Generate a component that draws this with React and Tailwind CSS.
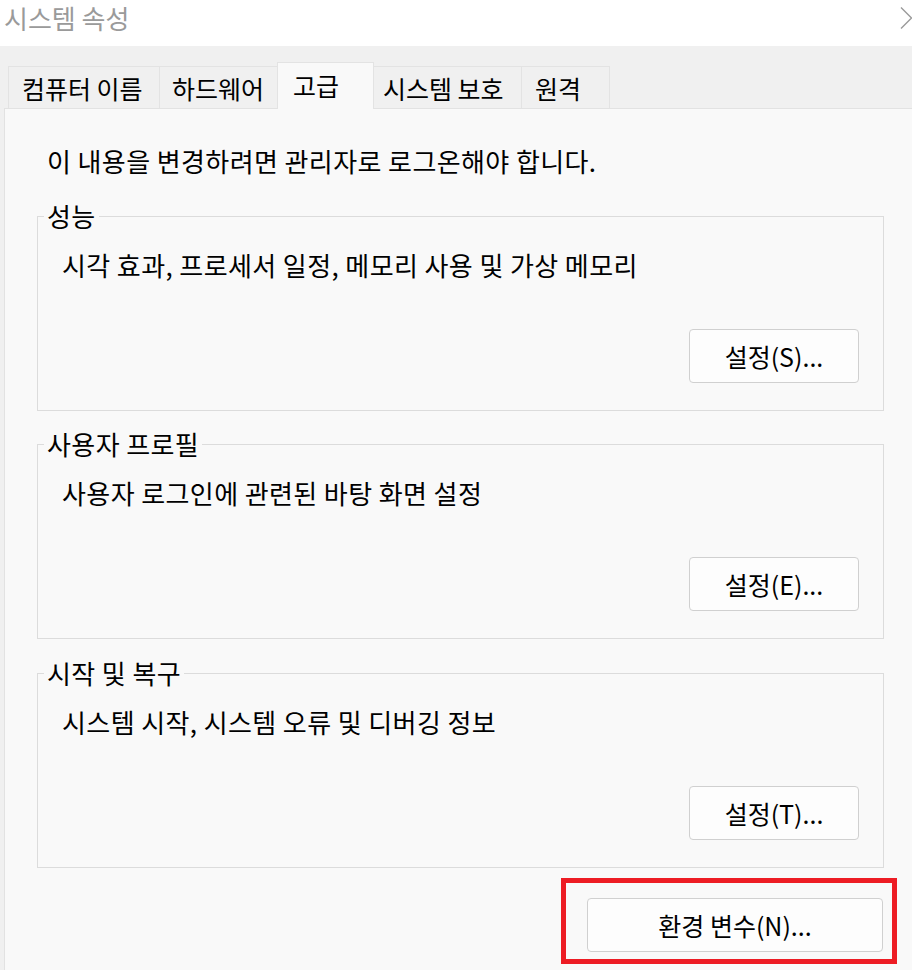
import React from "react";

// System Properties > Advanced tab
// Panel:    #F9F9F9
// Strip:    #F0F0F0
// Borders:  #DCDCDC
// Callout:  #ED1C24

const tabs = [
  { label: "컴퓨터 이름", w: "w-[152px]", pl: "pl-[13px]" },
  { label: "하드웨어", w: "w-[119px]", pl: "pl-[12px]" },
  { label: "고급", w: "w-[97px]", pl: "pl-[15px]", active: true },
  { label: "시스템 보호", w: "w-[149px]", pl: "pl-[9px]" },
  { label: "원격", w: "w-[89px]", pl: "pl-[13px]" },
];

function Tab({ tab }) {
  if (tab.active) {
    return (
      <div
        className={`relative z-10 -mb-px -ml-px flex h-[47px] items-center border border-b-0 border-[#e3e3e3] bg-[#f9f9f9] ${tab.w} ${tab.pl}`}
      >
        <span className="pb-[2px] leading-[32px]">{tab.label}</span>
      </div>
    );
  }
  return (
    <div
      className={`-ml-px flex h-[42px] items-center border border-b-0 border-[#e3e3e3] bg-[#f0f0f0] first:ml-0 ${tab.w} ${tab.pl}`}
    >
      <span className="leading-[32px]">{tab.label}</span>
    </div>
  );
}

function Button({ children, className = "" }) {
  return (
    <button
      type="button"
      className={`flex h-[54px] items-center justify-center rounded-[4px] border border-[#d0d0d0] bg-[#fdfdfd] text-[25px] leading-[32px] tracking-normal text-black ${className}`}
    >
      {children}
    </button>
  );
}

function Group({ title, text, action, className = "" }) {
  return (
    <fieldset
      className={`w-[847px] border border-[#dcdcdc] pb-[27px] ${className}`}
    >
      <legend className="ml-[6px] px-[3px] leading-[32px]">{title}</legend>
      <div className="mt-[17px] pl-[24px] leading-[32px]">{text}</div>
      <div className="mt-[48px] flex justify-end pr-[24px]">
        <Button className="w-[170px]">{action}</Button>
      </div>
    </fieldset>
  );
}

export default function App() {
  return (
    <div className="flex h-[970px] w-[912px] flex-col overflow-hidden bg-[#f0f0f0] font-['Noto_Sans_CJK_KR',sans-serif] text-[26px] tracking-[0.4px] text-black">
      {/* title bar */}
      <div className="flex h-[46px] shrink-0 items-start justify-between bg-white">
        <span className="pl-[4px] leading-[36px] tracking-normal text-[#9a9a9a]">
          시스템 속성
        </span>
        <svg
          width="12"
          height="22"
          viewBox="0 0 12 22"
          className="mt-[7px]"
          fill="none"
          stroke="#9a9a9a"
          strokeWidth="1.4"
        >
          <path d="M1 0.5L11.5 11L1 21.5" />
        </svg>
      </div>

      {/* tab strip */}
      <div className="flex h-[62px] shrink-0 items-end pl-[8px] text-[25px] tracking-normal">
        {tabs.map((t) => (
          <Tab key={t.label} tab={t} />
        ))}
      </div>

      {/* tab page */}
      <div className="ml-[4px] flex-1 border-l border-t border-[#e2e2e2] bg-[#f9f9f9]">
        <div className="mt-[36px] pl-[42px] leading-[32px]">
          이 내용을 변경하려면 관리자로 로그온해야 합니다.
        </div>

        <div className="ml-[32px] mt-[23px] flex flex-col">
          <Group
            title="성능"
            text="시각 효과, 프로세서 일정, 메모리 사용 및 가상 메모리"
            action="설정(S)..."
          />
          <Group
            className="mt-[17px]"
            title="사용자 프로필"
            text="사용자 로그인에 관련된 바탕 화면 설정"
            action="설정(E)..."
          />
          <Group
            className="mt-[18px]"
            title="시작 및 복구"
            text="시스템 시작, 시스템 오류 및 디버깅 정보"
            action="설정(T)..."
          />
        </div>

        <div className="ml-[556px] mt-[10px] w-[336px] border-[5px] border-[#ed1c24] pb-[7px] pl-[21px] pr-[9px] pt-[15px]">
          <Button className="w-[296px]">환경 변수(N)...</Button>
        </div>
      </div>
    </div>
  );
}
